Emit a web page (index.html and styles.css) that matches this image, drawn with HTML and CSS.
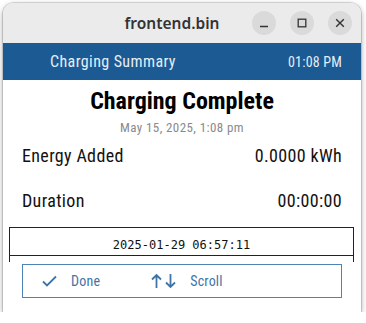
FILE: index.html
```html
<!DOCTYPE html>
<html lang="en">
<head>
    <meta charset="UTF-8">
    <meta name="viewport" content="width=device-width, initial-scale=1.0">
    <title>frontend.bin</title>
    <link rel="stylesheet" href="styles.css">
</head>
<body>
    <div class="window">
        <!-- Title bar -->
        <div class="titlebar">
            <span class="title">frontend.bin</span>
            <div class="controls">
                <span class="ctl"><svg width="10" height="10" viewBox="0 0 10 10"><path d="M1 8.5h8" stroke="#333" stroke-width="1.4"/></svg></span>
                <span class="ctl"><svg width="10" height="10" viewBox="0 0 10 10"><rect x="1.2" y="1.2" width="7.6" height="7.6" fill="none" stroke="#333" stroke-width="1.3"/></svg></span>
                <span class="ctl"><svg width="10" height="10" viewBox="0 0 10 10"><path d="M1.2 1.2l7.6 7.6M8.8 1.2l-7.6 7.6" stroke="#333" stroke-width="1.4"/></svg></span>
            </div>
        </div>

        <!-- App header -->
        <header>
            <span class="header-title">Charging Summary</span>
            <span class="header-time">01:08 PM</span>
        </header>

        <!-- Summary -->
        <div class="content">
            <h1>Charging Complete</h1>
            <p class="date">May 15, 2025, 1:08 pm</p>
            <div class="row first">
                <span>Energy Added</span>
                <span>0.0000 kWh</span>
            </div>
            <div class="row">
                <span>Duration</span>
                <span>00:00:00</span>
            </div>
            <div class="log">
                <div class="log-row">2025-01-29 06:57:11</div>
            </div>
        </div>

        <!-- Footer buttons -->
        <div class="footer">
            <div class="actions">
                <span class="action">
                    <svg width="15" height="12" viewBox="0 0 15 12"><path d="M1 6.5l4 4L14 1.5" fill="none" stroke="#3f74a8" stroke-width="1.8"/></svg>
                    Done
                </span>
                <span class="action scroll">
                    <svg width="26" height="16" viewBox="0 0 26 16"><path d="M5.5 15V2M1 6.5l4.5-4.5 4.5 4.5M19.5 1v13M15 9.5l4.5 4.5 4.5-4.5" fill="none" stroke="#3f74a8" stroke-width="1.8"/></svg>
                    Scroll
                </span>
            </div>
        </div>
    </div>
</body>
</html>
```

FILE: styles.css
```css
/* General */
html, body {
    margin: 0;
    padding: 0;
    background: #fff;
}
body {
    padding: 3px 5px 0 3px;
    font-family: Roboto, "Liberation Sans", sans-serif;
    font-stretch: 87.5%;
}
.window {
    width: 358px;
    height: 309px;
    background: #fff;
    border-radius: 11px 11px 0 0;
    overflow: hidden;
    box-shadow: 0 0 0 1px rgba(0, 0, 0, 0.12), 0 2px 6px rgba(0, 0, 0, 0.35);
    display: flex;
    flex-direction: column;
}

/* Title bar */
.titlebar {
    height: 40px;
    flex-shrink: 0;
    background: #ebebeb;
    display: flex;
    align-items: center;
}
.title {
    flex: 1;
    text-align: center;
    padding-left: 89px;
    font-family: "Noto Sans", sans-serif;
    font-stretch: normal;
    font-weight: 600;
    font-size: 15.5px;
    color: #333;
}
.controls {
    display: flex;
    gap: 14px;
    padding-right: 9px;
}
.ctl {
    width: 24px;
    height: 24px;
    border-radius: 50%;
    background: #dadada;
    display: flex;
    justify-content: center;
    align-items: center;
}

/* Header */
header {
    height: 37px;
    flex-shrink: 0;
    background: #1b5a93;
    color: #e6eef6;
    display: flex;
    justify-content: space-between;
    align-items: center;
    padding: 0 19px 0 47px;
}
.header-title {
    font-size: 16px;
    letter-spacing: 0.4px;
}
.header-time {
    font-size: 14px;
    letter-spacing: 0.2px;
}

/* Content */
.content {
    flex: 1;
    min-height: 0;
    overflow: hidden;
    padding: 7px 0 0;
}
h1 {
    margin: 0;
    text-align: center;
    font-size: 24px;
    line-height: 28px;
    font-weight: 700;
    color: #000;
}
.date {
    margin: 5px 0 0;
    text-align: center;
    font-size: 13px;
    line-height: 16px;
    letter-spacing: 0.4px;
    color: #8a8a8a;
}
.row {
    display: flex;
    justify-content: space-between;
    padding: 0 19px;
    margin-top: 21px;
    font-size: 18px;
    line-height: 24px;
    letter-spacing: 0.35px;
    color: #111;
}
.row.first {
    margin-top: 8px;
}
.log {
    margin: 14px 7px 0 6px;
    height: 35px;
    border: 1px solid #222;
    border-bottom: none;
}
.log-row {
    height: 27px;
    border-bottom: 1px solid #222;
    text-align: center;
    font-family: "DejaVu Sans Mono", monospace;
    font-stretch: normal;
    font-size: 12px;
    line-height: 34px;
    color: #111;
}

/* Footer */
.footer {
    height: 48px;
    flex-shrink: 0;
    padding: 2px 19px 0 19px;
}
.actions {
    height: 32px;
    border: 1.5px solid #4f82b5;
    display: flex;
    align-items: center;
    padding-left: 19px;
    gap: 51px;
}
.action {
    display: flex;
    align-items: center;
    gap: 14px;
    font-size: 14px;
    letter-spacing: 0.2px;
    color: #3f74a8;
}
.scroll {
    gap: 13px;
}
```
